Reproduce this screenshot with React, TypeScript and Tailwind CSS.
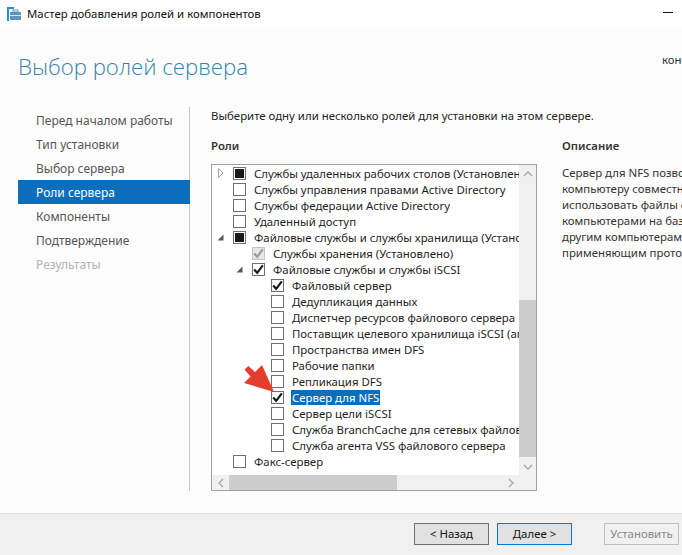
import React from 'react'

type Row = { label: string; depth: number; state: 'none' | 'check' | 'mixed' | 'disabled'; expander?: 'open' | 'closed'; selected?: boolean }

const rows: Row[] = [
    { label: 'Службы удаленных рабочих столов (Установлено)', depth: 0, state: 'mixed', expander: 'closed' },
    { label: 'Службы управления правами Active Directory', depth: 0, state: 'none' },
    { label: 'Службы федерации Active Directory', depth: 0, state: 'none' },
    { label: 'Удаленный доступ', depth: 0, state: 'none' },
    { label: 'Файловые службы и службы хранилища (Установлено)', depth: 0, state: 'mixed', expander: 'open' },
    { label: 'Службы хранения (Установлено)', depth: 1, state: 'disabled' },
    { label: 'Файловые службы и службы iSCSI', depth: 1, state: 'check', expander: 'open' },
    { label: 'Файловый сервер', depth: 2, state: 'check' },
    { label: 'Дедупликация данных', depth: 2, state: 'none' },
    { label: 'Диспетчер ресурсов файлового сервера', depth: 2, state: 'none' },
    { label: 'Поставщик целевого хранилища iSCSI (агент)', depth: 2, state: 'none' },
    { label: 'Пространства имен DFS', depth: 2, state: 'none' },
    { label: 'Рабочие папки', depth: 2, state: 'none' },
    { label: 'Репликация DFS', depth: 2, state: 'none' },
    { label: 'Сервер для NFS', depth: 2, state: 'check', selected: true },
    { label: 'Сервер цели iSCSI', depth: 2, state: 'none' },
    { label: 'Служба BranchCache для сетевых файлов', depth: 2, state: 'none' },
    { label: 'Служба агента VSS файлового сервера', depth: 2, state: 'none' },
    { label: 'Факс-сервер', depth: 0, state: 'none' },
]

const steps = ['Перед началом работы', 'Тип установки', 'Выбор сервера', 'Роли сервера', 'Компоненты', 'Подтверждение', 'Результаты']

const depthPad = ['pl-[2px]', 'pl-[21px]', 'pl-[40px]']

const Check = ({ color }: { color: string }) => (
    <svg width="11" height="11" viewBox="0 0 11 11" fill="none">
        <path d="M1.2 5.6 L4.2 8.8 L9.8 1.4" stroke={color} strokeWidth="2.2" />
    </svg>
)

const Box = ({ state }: { state: Row['state'] }) => {
    if (state === 'disabled') {
        return (
            <div className="w-[13px] h-[13px] border border-[#c4c4c4] bg-[#e6e6e6] flex items-center justify-center shrink-0">
                <Check color="#9a9a9a" />
            </div>
        )
    }
    return (
        <div className="w-[13px] h-[13px] border border-[#707070] bg-white flex items-center justify-center shrink-0">
            {state === 'check' && <Check color="#1a1a1a" />}
            {state === 'mixed' && <div className="w-[9px] h-[9px] bg-[#1a1a1a]" />}
        </div>
    )
}

const Expander = ({ kind }: { kind?: 'open' | 'closed' }) => (
    <div className="w-[13px] h-[13px] mr-[6px] flex items-center justify-center shrink-0">
        {kind === 'open' && (
            <svg width="7" height="7" viewBox="0 0 7 7"><path d="M6.5 0.5 V6.5 H0.5 Z" fill="#595959" /></svg>
        )}
        {kind === 'closed' && (
            <svg width="6" height="10" viewBox="0 0 6 10"><path d="M0.5 0.5 L5 5 L0.5 9.5 Z" fill="#fff" stroke="#a6a6a6" /></svg>
        )}
    </div>
)

const TreeRow = ({ row }: { row: Row }) => (
    <div className={`h-4 flex items-center ${depthPad[row.depth]}`}>
        <Expander kind={row.expander} />
        <Box state={row.state} />
        <span className={`ml-[7px] px-px leading-[15px] whitespace-nowrap ${row.selected ? 'bg-[#0a6ebd] text-white' : 'text-[#1e1e1e]'}`}>
            {row.label}
        </span>
    </div>
)

const Chevron = ({ dir }: { dir: 'up' | 'down' | 'left' | 'right' }) => {
    const d = {
        up: 'M1 6 L5 2 L9 6',
        down: 'M1 2 L5 6 L9 2',
        left: 'M6 1 L2 5 L6 9',
        right: 'M2 1 L6 5 L2 9',
    }[dir]
    const size = dir === 'up' || dir === 'down' ? { w: 10, h: 8 } : { w: 8, h: 10 }
    return (
        <svg width={size.w} height={size.h} viewBox={`0 0 ${size.w} ${size.h}`} fill="none">
            <path d={d} stroke="#a6a6a6" strokeWidth="1.3" />
        </svg>
    )
}

const Button = ({ children, className }: { children: React.ReactNode; className: string }) => (
    <div className={`w-[75px] h-[22px] flex items-center justify-center ${className}`}>{children}</div>
)

export default function App() {
    return (
        <div className="relative w-[682px] h-[555px] overflow-hidden bg-white text-[11.4px] font-['Noto_Sans',sans-serif] text-[#1e1e1e]">
            <div className="h-7 flex items-center pl-[7px] pr-[9px] bg-white">
                <svg width="14" height="14" viewBox="0 0 14 14" className="mr-[6px]">
                    <rect x="0" y="0" width="7" height="2" fill="#1f8fd6" />
                    <rect x="0" y="2" width="2" height="12" fill="#1f8fd6" />
                    <rect x="3" y="5" width="11" height="8" fill="#5f93ba" />
                    <rect x="6" y="3" width="5" height="2" fill="none" stroke="#5f93ba" strokeWidth="1" />
                    <rect x="3" y="8" width="11" height="1" fill="#d6e4ee" />
                </svg>
                <span className="text-[#111]">Мастер добавления ролей и компонентов</span>
                <div className="ml-auto w-[10px] h-px bg-[#111] mb-[4px]" />
            </div>

            <div className="h-[485px] bg-[#fcfcfc] flex flex-col">
                <div className="h-[79px] flex pl-[18px] relative">
                    <h1 className="mt-[24px] text-[22.2px] leading-[30px] font-light font-['Open_Sans',sans-serif] text-[#3583ab]">Выбор ролей сервера</h1>
                    <span className="absolute left-[662px] top-[23px] whitespace-nowrap text-[#333]">конечный сервер</span>
                </div>

                <div className="flex pl-[18px] h-[384px]">
                    <div className="w-[172px] h-full border-r border-[#c8c8c8] pt-[1px] text-[12px]">
                        {steps.map((step, i) => (
                            <div
                                key={step}
                                className={`h-6 pl-[18px] leading-[25px] ${i === 3 ? 'bg-[#0a6ebd] text-white -mr-[1px]' : i === 6 ? 'text-[#b4b4b4]' : 'text-[#555]'}`}
                            >
                                {step}
                            </div>
                        ))}
                    </div>

                    <div className="pl-[21px] pt-px flex-1 min-w-0">
                        <p className="whitespace-nowrap leading-4 text-[#222]">Выберите одну или несколько ролей для установки на этом сервере.</p>
                        <div className="flex mt-[14px]">
                            <div className="w-[326px] shrink-0">
                                <h2 className="font-semibold leading-4 text-[#333]">Роли</h2>
                                <div className="mt-[10px] w-[326px] h-[327px] border border-[#a0a0a0] bg-white flex flex-col">
                                    <div className="flex h-[310px]">
                                        <div className="w-[307px] overflow-hidden">
                                            {rows.map((row) => (
                                                <TreeRow key={row.label} row={row} />
                                            ))}
                                        </div>
                                        <div className="w-[17px] bg-[#f0f0f0] flex flex-col">
                                            <div className="h-[17px] flex items-center justify-center"><Chevron dir="up" /></div>
                                            <div className="h-[118px]" />
                                            <div className="h-[157px] bg-[#cdcdcd]" />
                                            <div className="h-[17px] flex items-center justify-center mt-auto"><Chevron dir="down" /></div>
                                        </div>
                                    </div>
                                    <div className="h-[15px] bg-[#f0f0f0] flex items-stretch">
                                        <div className="w-[17px] flex items-center justify-center"><Chevron dir="left" /></div>
                                        <div className="w-[168px] bg-[#cdcdcd]" />
                                        <div className="ml-auto w-[17px] mr-[17px] flex items-center justify-center"><Chevron dir="right" /></div>
                                    </div>
                                </div>
                            </div>
                            <div className="ml-[25px] w-[200px] shrink-0">
                                <h2 className="font-semibold leading-4 text-[#333]">Описание</h2>
                                <div className="mt-[10px] leading-4 whitespace-nowrap text-[#333] pt-px">
                                    <p>Сервер для NFS позволяет этому</p>
                                    <p>компьютеру совместно</p>
                                    <p>использовать файлы с</p>
                                    <p>компьютерами на базе</p>
                                    <p>другим компьютерам,</p>
                                    <p>применяющим протокол</p>
                                </div>
                            </div>
                        </div>
                    </div>
                </div>
            </div>

            <div className="h-[42px] bg-[#f0f0f0] border-t border-[#dfdfdf] flex items-center pl-[414px] pb-px">
                <Button className="border border-[#707070] bg-[#e1e1e1] text-[#111]">&lt; Назад</Button>
                <Button className="ml-[8px] border border-[#0078d7] bg-[#e1e1e1] text-[#111]">Далее &gt;</Button>
                <Button className="ml-[32px] border border-[#bfbfbf] bg-[#f0f0f0] text-[#8a8a8a]">Установить</Button>
            </div>

            <svg width="40" height="40" viewBox="0 0 40 40" className="absolute left-[240px] top-[360px]">
                <path d="M34 32 L4 23 L10.5 16.5 L4.5 9.5 L8.5 6 L15 12 L22 5 Z" fill="#e63c2e" />
            </svg>
        </div>
    )
}
